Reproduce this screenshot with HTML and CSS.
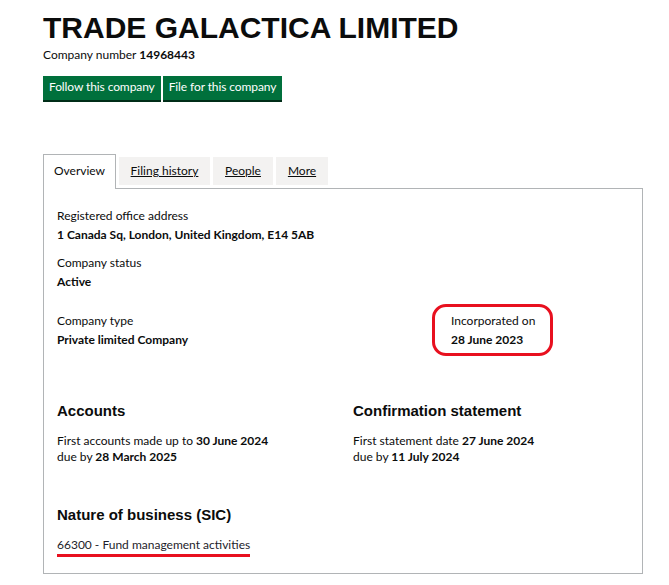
FILE: index.html
```html
<!DOCTYPE html>
<html lang="en">
<head>
<meta charset="utf-8">
<title>TRADE GALACTICA LIMITED</title>
<link rel="stylesheet" href="styles.css">
</head>
<body>
<main class="page">
  <h1 class="title">TRADE GALACTICA LIMITED</h1>
  <p class="company-number">Company number <strong>14968443</strong></p>
  <div class="actions">
    <a class="button" href="#">Follow this company</a>
    <a class="button" href="#">File for this company</a>
  </div>

  <nav class="tabs">
    <span class="tab tab-active tab-overview">Overview</span>
    <a class="tab tab-filing" href="#">Filing history</a>
    <a class="tab tab-people" href="#">People</a>
    <a class="tab tab-more" href="#">More</a>
  </nav>

  <section class="panel">
    <dl class="field">
      <dt>Registered office address</dt>
      <dd>1 Canada Sq, London, United Kingdom, E14 5AB</dd>
    </dl>
    <dl class="field">
      <dt>Company status</dt>
      <dd>Active</dd>
    </dl>
    <div class="row-type">
      <dl class="field">
        <dt>Company type</dt>
        <dd>Private limited Company</dd>
      </dl>
      <dl class="field incorporated">
        <dt>Incorporated on</dt>
        <dd>28 June 2023</dd>
        <span class="circle"></span>
      </dl>
    </div>
    <div class="row-dates">
      <div class="block">
        <h2 class="heading">Accounts</h2>
        <p class="text">First accounts made up to <strong>30 June 2024</strong><br>due by <strong>28 March 2025</strong></p>
      </div>
      <div class="block">
        <h2 class="heading">Confirmation statement</h2>
        <p class="text">First statement date <strong>27 June 2024</strong><br>due by <strong>11 July 2024</strong></p>
      </div>
    </div>
    <h2 class="heading heading-sic">Nature of business (SIC)</h2>
    <p class="sic"><span class="sic-item">66300 - Fund management activities</span></p>
  </section>
</main>
</body>
</html>
```
FILE: styles.css
```css
* { box-sizing: border-box; }
html, body { margin: 0; padding: 0; background: #ffffff; }
body {
  font-family: Lato, "Noto Sans", sans-serif;
  color: #0b0c0c;
  font-size: 12px;
}
.page {
  width: 600px;
  margin-left: 43px;
  padding-top: 12px;
}
.title {
  font-family: "Liberation Sans", Arial, sans-serif;
  font-weight: 700;
  font-size: 30px;
  line-height: 32px;
  margin: 0;
  letter-spacing: 0;
}
.company-number {
  margin: 3px 0 0 0;
  font-size: 12px;
  line-height: 16px;
}
.company-number strong { font-weight: 700; }
.actions {
  display: flex;
  gap: 2px;
  margin-top: 13px;
}
.button {
  display: block;
  background: #00703c;
  color: #ffffff;
  text-decoration: none;
  font-size: 12px;
  line-height: 22px;
  height: 24px;
  padding: 0 6px;
  box-shadow: 0 2px 0 #002d18;
  letter-spacing: -0.1px;
}
.tabs {
  display: flex;
  align-items: flex-end;
  gap: 3px;
  margin-top: 54px;
  position: relative;
  z-index: 1;
}
.tab {
  display: block;
  background: #f3f2f1;
  color: #0b0c0c;
  font-size: 12px;
  line-height: 28px;
  height: 28px;
  text-align: center;
  text-decoration: underline;
  margin-bottom: 3px;
}
.tab-overview { width: 73px; }
.tab-filing { width: 91px; }
.tab-people { width: 60px; }
.tab-more { width: 52px; }
.tab-active {
  background: #ffffff;
  border: 1px solid #b1b4b6;
  border-bottom: none;
  height: 35px;
  line-height: 31px;
  text-decoration: none;
  margin-bottom: -1px;
}
.panel {
  border: 1px solid #b1b4b6;
  width: 600px;
  height: 386px;
  padding: 19px 13px 0 13px;
  margin-top: 0;
}
.field { margin: 0 0 12px 0; }
.field dt { font-size: 12px; line-height: 16px; margin: 0; }
.field dd { margin: 3px 0 0 0; font-weight: 700; font-size: 12px; line-height: 16px; }
.row-type {
  display: grid;
  grid-template-columns: 394px 1fr;
  margin-top: 23px;
}
.incorporated { position: relative; }
.circle {
  position: absolute;
  left: -19px;
  top: -9px;
  width: 121px;
  height: 52px;
  border: 3px solid #e8101f;
  border-radius: 14px;
}
.row-dates {
  display: grid;
  grid-template-columns: 296px 1fr;
  margin-top: 41px;
}
.heading {
  font-family: "Liberation Sans", Arial, sans-serif;
  font-weight: 700;
  font-size: 15px;
  line-height: 20px;
  margin: 0;
}
.text {
  margin: 12px 0 0 0;
  font-size: 12px;
  line-height: 16px;
}
.heading-sic {
  font-size: 15px;
  margin-top: 40px;
}
.sic {
  margin: 12px 0 0 0;
  font-size: 12px;
  line-height: 16px;
}
.sic-item {
  display: inline-block;
  border-bottom: 3px solid #e8101f;
  padding-bottom: 1px;
  color: #1d1d2b;
}
```
